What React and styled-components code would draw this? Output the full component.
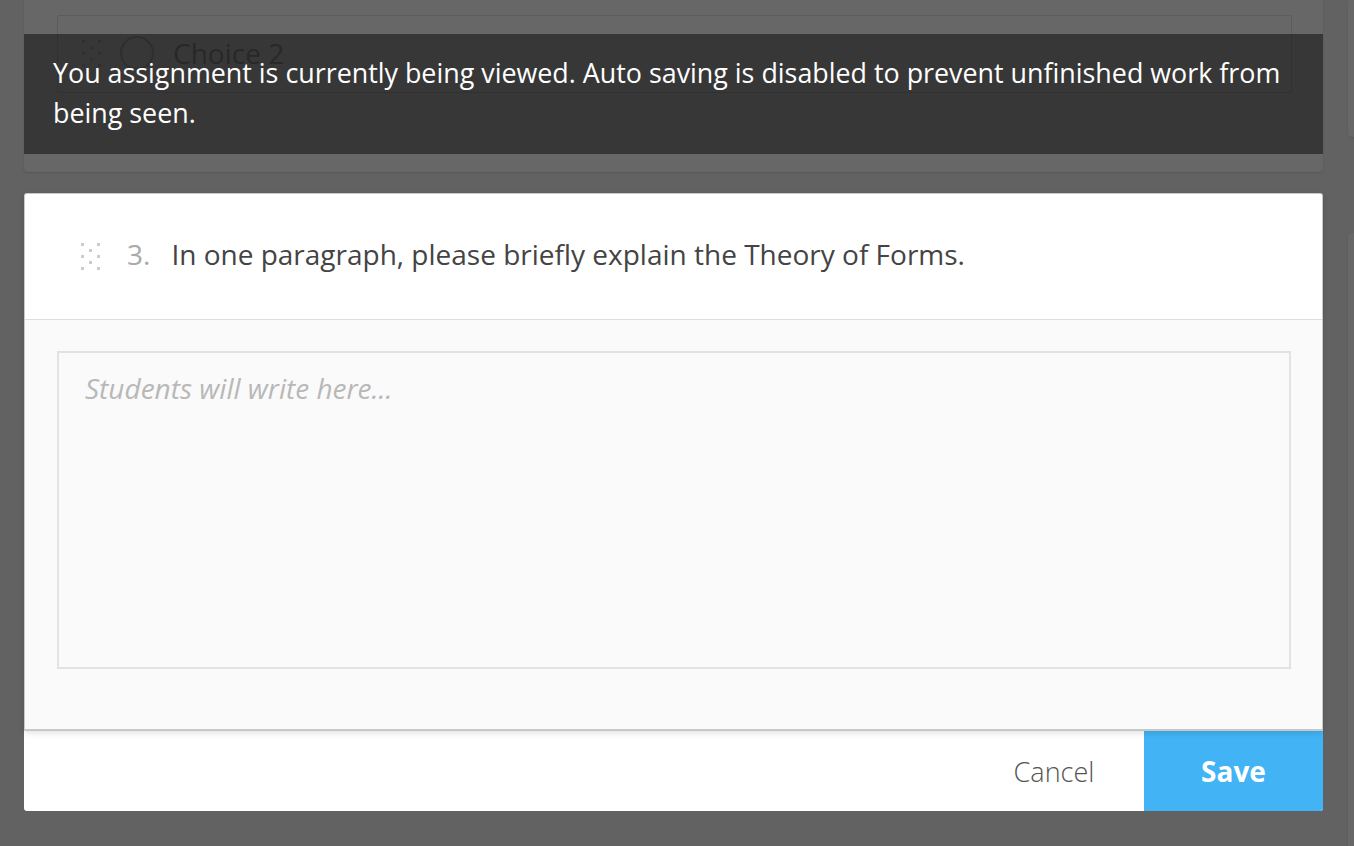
import React from "react";
import styled, { createGlobalStyle } from "styled-components";

const GlobalStyle = createGlobalStyle`
  html, body {
    margin: 0;
    padding: 0;
    height: 100%;
    overflow: hidden;
    background: #626262;
    font-family: "Open Sans", "Liberation Sans", sans-serif;
  }
`;

const DragHandle = ({ color = "#cccccc" }) => (
  <svg width="19" height="27" viewBox="0 0 19 27">
    {[
      [0, 0],
      [16, 0],
      [8, 6],
      [0, 12],
      [16, 12],
      [8, 18],
      [0, 24],
      [16, 24],
    ].map(([x, y]) => (
      <rect key={`${x}-${y}`} x={x} y={y} width="3" height="3" fill={color} />
    ))}
  </svg>
);

const App = () => {
  return (
    <Page>
      <GlobalStyle />
      <MainColumn>
        <DimCard>
          <ChoiceBox>
            <DragHandle color="#5a5a5a" />
            <Radio />
            <ChoiceLabel>Choice 2</ChoiceLabel>
          </ChoiceBox>
          <Toast>
            You assignment is currently being viewed. Auto saving is disabled to
            prevent unfinished work from being seen.
          </Toast>
        </DimCard>

        <Editor>
          <QuestionCard>
            <QuestionHeader>
              <DragHandle />
              <QuestionNumber>3.</QuestionNumber>
              <QuestionText>
                In one paragraph, please briefly explain the Theory of Forms.
              </QuestionText>
            </QuestionHeader>
            <AnswerArea>
              <AnswerBox>
                <Placeholder>Students will write here...</Placeholder>
              </AnswerBox>
            </AnswerArea>
          </QuestionCard>
          <Footer>
            <FooterButton>Cancel</FooterButton>
            <FooterButton primary>Save</FooterButton>
          </Footer>
        </Editor>
      </MainColumn>

      <SideColumn>
        <SideCard height={137} />
        <SideCard height={700} />
      </SideColumn>
    </Page>
  );
};

const Page = styled.div`
  display: flex;
  align-items: flex-start;
  gap: 25px;
  padding-left: 24px;
  height: 846px;
  overflow: hidden;
`;

const MainColumn = styled.div`
  width: 1299px;
  flex-shrink: 0;
  display: flex;
  flex-direction: column;
  gap: 21px;
`;

const DimCard = styled.div`
  position: relative;
  margin-top: -40px;
  height: 212px;
  box-sizing: border-box;
  padding: 55px 31px 0 33px;
  background: #676767;
  border-radius: 0 0 4px 4px;
  box-shadow: 0 1px 2px rgba(0, 0, 0, 0.12);
`;

const ChoiceBox = styled.div`
  display: flex;
  align-items: center;
  height: 78px;
  box-sizing: border-box;
  padding-left: 24px;
  padding-bottom: 2px;
  border: 1px solid #5c5c5c;
  border-radius: 2px;

  svg {
    margin-right: 19px;
  }
`;

const Radio = styled.span`
  width: 30px;
  height: 30px;
  border: 2px solid #555555;
  border-radius: 50%;
  margin-right: 19px;
`;

const ChoiceLabel = styled.span`
  font-size: 28px;
  color: #4a4a4a;
`;

const Toast = styled.div`
  position: absolute;
  left: 0;
  right: 0;
  top: 74px;
  box-sizing: border-box;
  height: 120px;
  padding: 19px 20px 0 29px;
  background: rgba(0, 0, 0, 0.46);
  color: #ffffff;
  font-size: 26.85px;
  line-height: 40px;
`;

const Editor = styled.div`
  display: flex;
  flex-direction: column;
`;

const QuestionCard = styled.div`
  position: relative;
  z-index: 1;
  border: 1px solid #c8c8c8;
  border-bottom-width: 2px;
  border-radius: 3px 3px 0 0;
  box-shadow: 0 2px 6px rgba(0, 0, 0, 0.12);
  background: #fafafa;
`;

const QuestionHeader = styled.div`
  display: flex;
  align-items: center;
  height: 126px;
  box-sizing: border-box;
  padding: 0 0 5px 56px;
  background: #ffffff;
  border-bottom: 1px solid #dddddd;
  border-radius: 3px 3px 0 0;

  svg {
    margin-right: 27px;
    margin-top: 4px;
  }
`;

const QuestionNumber = styled.span`
  font-size: 28px;
  color: #aaaaaa;
  margin-right: 21px;
`;

const QuestionText = styled.span`
  font-size: 28px;
  color: #444444;
`;

const AnswerArea = styled.div`
  padding: 31px 31px 60px 32px;
`;

const AnswerBox = styled.div`
  height: 318px;
  box-sizing: border-box;
  border: 2px solid #e2e2e2;
  padding: 16px 26px;
  background: #fafafa;
`;

const Placeholder = styled.span`
  font-size: 28px;
  font-style: italic;
  color: #b8b8b8;
  line-height: 38px;
`;

const Footer = styled.div`
  display: flex;
  justify-content: flex-end;
  height: 80px;
  background: #ffffff;
  border-radius: 0 0 3px 3px;
  overflow: hidden;
`;

const FooterButton = styled.button`
  width: ${({ primary }) => (primary ? "179px" : "180px")};
  border: none;
  padding: 0;
  background: ${({ primary }) => (primary ? "#42b3f4" : "transparent")};
  color: ${({ primary }) => (primary ? "#ffffff" : "#555555")};
  font-family: "Open Sans", "Liberation Sans", sans-serif;
  font-size: ${({ primary }) => (primary ? "28px" : "27px")};
  font-weight: ${({ primary }) => (primary ? 700 : 300)};
  cursor: pointer;
`;

const SideColumn = styled.div`
  display: flex;
  flex-direction: column;
  gap: 96px;
  width: 300px;
  flex-shrink: 0;
`;

const SideCard = styled.div`
  height: ${({ height }) => height}px;
  background: #676767;
  border-radius: 4px;
  box-shadow: 0 1px 2px rgba(0, 0, 0, 0.12);
  &:first-child {
    border-radius: 0 0 4px 4px;
  }
`;

export default App;
